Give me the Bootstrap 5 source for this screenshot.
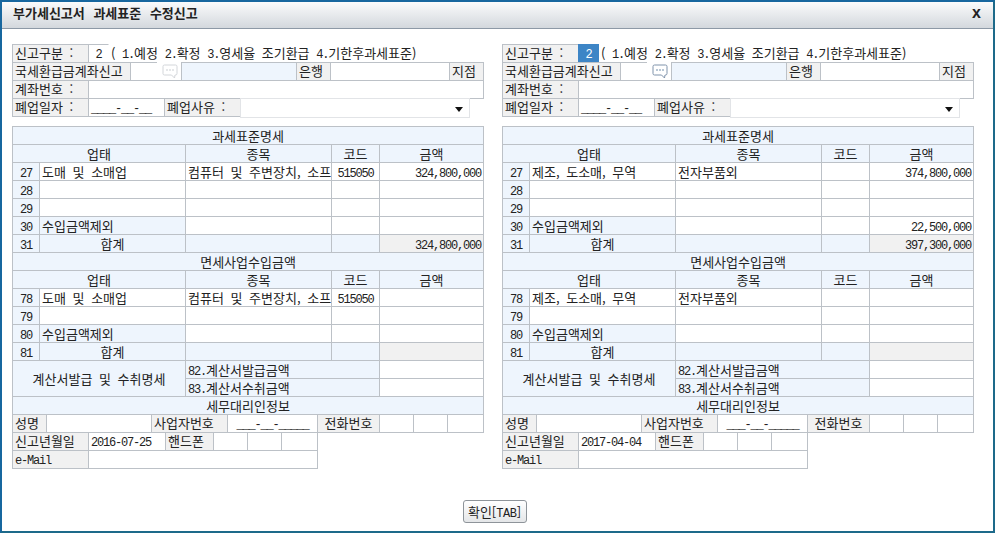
<!DOCTYPE html>
<html lang="ko">
<head>
<meta charset="utf-8">
<title>부가세신고서 과세표준 수정신고</title>
<link href="https://cdn.jsdelivr.net/npm/bootstrap@5.3.0/dist/css/bootstrap.min.css" rel="stylesheet">
<style>
html,body{height:100%;background:#fff;}
body{font-family:"Noto Sans CJK KR","Liberation Sans",sans-serif;font-size:13px;line-height:16px;color:#222;word-spacing:3px;}
.win{width:995px;height:533px;border:2px solid #17679f;border-right-color:#1d6a8a;border-bottom-color:#1d6a8a;background:#fff;}
.ttl{height:27px;padding:0 12px 4px 11px;background:linear-gradient(#fafbfc,#d3d8dd);border-bottom:1px solid #8d99a6;font-weight:700;word-spacing:5px;}
.xbtn{font:700 16px/1 "Liberation Sans",sans-serif;color:#222;}
.panels{padding:15px 10px 0;gap:18px;}
.pan{width:472px;flex:none;}
.fr{display:grid;height:18px;}
.c{border:1px solid #bcc1c7;margin:0 -1px -1px 0;padding:0 2px;white-space:nowrap;overflow:hidden;background:#fff;line-height:16px;}
.g{background:#f1f1f1;}
.b{background:#eef5fd;}
.ctr{text-align:center;}
.rt{text-align:right;}
.nob{border-color:transparent;background:transparent;overflow:visible;}
.hl{background:#3d85c6;color:#fff;border-color:#3d85c6;}
.r1{grid-template-columns:76px 20px 1fr;}
.r1 .c{border-bottom-color:transparent;}
.r1 .c:nth-child(2){border-right-color:transparent;}
.r2{grid-template-columns:118px 27px 24px 115px 34px 119px 34px;}
.r3{grid-template-columns:76px 395px;}
.r4{grid-template-columns:76px 76px 76px 229px;}
.sel{position:relative;border-color:#e2e4e7;margin-bottom:-2px;}
.sel::after{content:"";position:absolute;right:6px;top:8px;border:4px solid transparent;border-top:5px solid #111;border-bottom:0;}
.ic{display:flex;align-items:center;justify-content:center;padding:0;border-color:transparent;background:#fff;}
.gt{table-layout:fixed;width:472px;margin:10px 0 0;border-collapse:collapse;}
.gt>tbody>tr>td{border:1px solid #bcc1c7;height:18px;padding:0 2px;line-height:15px;white-space:nowrap;overflow:hidden;background:#fff;color:#222;box-shadow:none;vertical-align:middle;}
.gt>tbody>tr>td.b{background:#eef5fd;}
.gt>tbody>tr>td.g{background:#f1f1f1;}
.k1{width:27px}.k2{width:146px}.k3{width:146px}.k4{width:48px}.k5{width:104px}
.a1{grid-template-columns:34px 105px 76px 90px 62px 34px 34px 36px;margin-top:-1px;}
.a2{grid-template-columns:76px 77px 48px 34px 34px 36px;}
.a3{grid-template-columns:76px 229px;}
.ltn{font-family:"Liberation Mono",monospace;font-size:12px;line-height:1;letter-spacing:-1.2px;word-spacing:0;}
.btnrow{padding:32px 6px 0 0;}
.okbtn{width:64px;height:23px;padding:0;font-size:13px;line-height:20px;color:#222;word-spacing:0;border:1px solid #8e949a;border-radius:3px;background:linear-gradient(#fff,#e4e6e8);}
.okbtn .ltn{letter-spacing:-.4px;}
</style>
</head>
<body>
<div class="win">
  <div class="ttl d-flex align-items-center justify-content-between">
    <span>부가세신고서 과세표준 수정신고</span>
    <span class="xbtn">x</span>
  </div>

  <div class="panels d-flex">
    <section class="pan">
      <div class="fr r1"><div class="c g">신고구분 :</div><div class="c ctr"><span class="ltn">2</span></div><div class="c nob">( <span class="ltn">1.</span>예정 <span class="ltn">2.</span>확정 <span class="ltn">3.</span>영세율 조기환급 <span class="ltn">4.</span>기한후과세표준)</div></div>
      <div class="fr r2"><div class="c g">국세환급금계좌신고</div><div class="c"></div><div class="c ic"><svg width="16" height="15" viewBox="0 0 16 15" fill="none"><path d="M2.5 1h11a1.5 1.5 0 0 1 1.5 1.5v7a1.5 1.5 0 0 1-1.5 1.5H13l-.5 3-3-3h-7A1.5 1.5 0 0 1 1 9.500v-7A1.500 1.500 0 0 1 2.500 1z" stroke="#d3d6da"/><circle cx="5" cy="6" r=".8" fill="#c4c8cd"/><circle cx="8" cy="6" r=".8" fill="#c4c8cd"/><circle cx="11" cy="6" r=".8" fill="#c4c8cd"/></svg></div><div class="c b"></div><div class="c g">은행</div><div class="c"></div><div class="c g">지점</div></div>
      <div class="fr r3"><div class="c g">계좌번호 :</div><div class="c"></div></div>
      <div class="fr r4"><div class="c g">폐업일자 :</div><div class="c"><span class="ltn">____-__-__</span></div><div class="c g">폐업사유 :</div><div class="c sel"></div></div>

      <table class="table gt">
        <colgroup><col class="k1"><col class="k2"><col class="k3"><col class="k4"><col class="k5"></colgroup>
        <tbody>
          <tr><td colspan="5" class="b ctr">과세표준명세</td></tr>
          <tr><td colspan="2" class="b ctr">업태</td><td class="b ctr">종목</td><td class="b ctr">코드</td><td class="b ctr">금액</td></tr>
          <tr><td class="b ctr"><span class="ltn">27</span></td><td>도매 및 소매업</td><td>컴퓨터 및 주변장치, 소프</td><td class="ctr"><span class="ltn">515050</span></td><td class="rt"><span class="ltn">324,800,000</span></td></tr>
          <tr><td class="b ctr"><span class="ltn">28</span></td><td></td><td></td><td></td><td></td></tr>
          <tr><td class="b ctr"><span class="ltn">29</span></td><td></td><td></td><td></td><td></td></tr>
          <tr><td class="b ctr"><span class="ltn">30</span></td><td class="b">수입금액제외</td><td></td><td></td><td></td></tr>
          <tr><td class="b ctr"><span class="ltn">31</span></td><td class="b ctr">합계</td><td class="b"></td><td class="b"></td><td class="g rt"><span class="ltn">324,800,000</span></td></tr>
          <tr><td colspan="5" class="b ctr">면세사업수입금액</td></tr>
          <tr><td colspan="2" class="b ctr">업태</td><td class="b ctr">종목</td><td class="b ctr">코드</td><td class="b ctr">금액</td></tr>
          <tr><td class="b ctr"><span class="ltn">78</span></td><td>도매 및 소매업</td><td>컴퓨터 및 주변장치, 소프</td><td class="ctr"><span class="ltn">515050</span></td><td></td></tr>
          <tr><td class="b ctr"><span class="ltn">79</span></td><td></td><td></td><td></td><td></td></tr>
          <tr><td class="b ctr"><span class="ltn">80</span></td><td class="b">수입금액제외</td><td></td><td></td><td></td></tr>
          <tr><td class="b ctr"><span class="ltn">81</span></td><td class="b ctr">합계</td><td class="b"></td><td class="b"></td><td class="g"></td></tr>
          <tr><td colspan="2" rowspan="2" class="b ctr">계산서발급 및 수취명세</td><td colspan="2" class="b"><span class="ltn">82.</span>계산서발급금액</td><td></td></tr>
          <tr><td colspan="2" class="b"><span class="ltn">83.</span>계산서수취금액</td><td></td></tr>
          <tr><td colspan="5" class="b ctr">세무대리인정보</td></tr>
        </tbody>
      </table>
      <div class="fr a1"><div class="c g">성명</div><div class="c"></div><div class="c g">사업자번호</div><div class="c ctr"><span class="ltn">___-__-_____</span></div><div class="c g ctr">전화번호</div><div class="c"></div><div class="c"></div><div class="c"></div></div>
      <div class="fr a2"><div class="c g">신고년월일</div><div class="c"><span class="ltn">2016-07-25</span></div><div class="c g">핸드폰</div><div class="c"></div><div class="c"></div><div class="c"></div></div>
      <div class="fr a3"><div class="c g"><span class="ltn">e-Mail</span></div><div class="c"></div></div>
    </section>

    <section class="pan">
      <div class="fr r1"><div class="c g">신고구분 :</div><div class="c ctr hl"><span class="ltn">2</span></div><div class="c nob">( <span class="ltn">1.</span>예정 <span class="ltn">2.</span>확정 <span class="ltn">3.</span>영세율 조기환급 <span class="ltn">4.</span>기한후과세표준)</div></div>
      <div class="fr r2"><div class="c g">국세환급금계좌신고</div><div class="c"></div><div class="c ic"><svg width="16" height="15" viewBox="0 0 16 15" fill="none"><path d="M2.5 1h11a1.5 1.5 0 0 1 1.5 1.5v7a1.5 1.5 0 0 1-1.5 1.5H13l-.5 3-3-3h-7A1.5 1.5 0 0 1 1 9.500v-7A1.500 1.500 0 0 1 2.500 1z" stroke="#7f93ab"/><circle cx="5" cy="6" r=".8" fill="#5f7f9f"/><circle cx="8" cy="6" r=".8" fill="#5f7f9f"/><circle cx="11" cy="6" r=".8" fill="#5f7f9f"/></svg></div><div class="c b"></div><div class="c g">은행</div><div class="c"></div><div class="c g">지점</div></div>
      <div class="fr r3"><div class="c g">계좌번호 :</div><div class="c"></div></div>
      <div class="fr r4"><div class="c g">폐업일자 :</div><div class="c"><span class="ltn">____-__-__</span></div><div class="c g">폐업사유 :</div><div class="c sel"></div></div>

      <table class="table gt">
        <colgroup><col class="k1"><col class="k2"><col class="k3"><col class="k4"><col class="k5"></colgroup>
        <tbody>
          <tr><td colspan="5" class="b ctr">과세표준명세</td></tr>
          <tr><td colspan="2" class="b ctr">업태</td><td class="b ctr">종목</td><td class="b ctr">코드</td><td class="b ctr">금액</td></tr>
          <tr><td class="b ctr"><span class="ltn">27</span></td><td>제조, 도소매, 무역</td><td>전자부품외</td><td></td><td class="rt"><span class="ltn">374,800,000</span></td></tr>
          <tr><td class="b ctr"><span class="ltn">28</span></td><td></td><td></td><td></td><td></td></tr>
          <tr><td class="b ctr"><span class="ltn">29</span></td><td></td><td></td><td></td><td></td></tr>
          <tr><td class="b ctr"><span class="ltn">30</span></td><td class="b">수입금액제외</td><td></td><td></td><td class="rt"><span class="ltn">22,500,000</span></td></tr>
          <tr><td class="b ctr"><span class="ltn">31</span></td><td class="b ctr">합계</td><td class="b"></td><td class="b"></td><td class="g rt"><span class="ltn">397,300,000</span></td></tr>
          <tr><td colspan="5" class="b ctr">면세사업수입금액</td></tr>
          <tr><td colspan="2" class="b ctr">업태</td><td class="b ctr">종목</td><td class="b ctr">코드</td><td class="b ctr">금액</td></tr>
          <tr><td class="b ctr"><span class="ltn">78</span></td><td>제조, 도소매, 무역</td><td>전자부품외</td><td></td><td></td></tr>
          <tr><td class="b ctr"><span class="ltn">79</span></td><td></td><td></td><td></td><td></td></tr>
          <tr><td class="b ctr"><span class="ltn">80</span></td><td class="b">수입금액제외</td><td></td><td></td><td></td></tr>
          <tr><td class="b ctr"><span class="ltn">81</span></td><td class="b ctr">합계</td><td class="b"></td><td class="b"></td><td class="g"></td></tr>
          <tr><td colspan="2" rowspan="2" class="b ctr">계산서발급 및 수취명세</td><td colspan="2" class="b"><span class="ltn">82.</span>계산서발급금액</td><td></td></tr>
          <tr><td colspan="2" class="b"><span class="ltn">83.</span>계산서수취금액</td><td></td></tr>
          <tr><td colspan="5" class="b ctr">세무대리인정보</td></tr>
        </tbody>
      </table>
      <div class="fr a1"><div class="c g">성명</div><div class="c"></div><div class="c g">사업자번호</div><div class="c ctr"><span class="ltn">___-__-_____</span></div><div class="c g ctr">전화번호</div><div class="c"></div><div class="c"></div><div class="c"></div></div>
      <div class="fr a2"><div class="c g">신고년월일</div><div class="c"><span class="ltn">2017-04-04</span></div><div class="c g">핸드폰</div><div class="c"></div><div class="c"></div><div class="c"></div></div>
      <div class="fr a3"><div class="c g"><span class="ltn">e-Mail</span></div><div class="c"></div></div>
    </section>
  </div>

  <div class="btnrow d-flex justify-content-center">
    <button type="button" class="btn okbtn">확인[<span class="ltn">TAB</span>]</button>
  </div>
</div>
<script src="https://cdn.jsdelivr.net/npm/bootstrap@5.3.0/dist/js/bootstrap.bundle.min.js"></script>
</body>
</html>
